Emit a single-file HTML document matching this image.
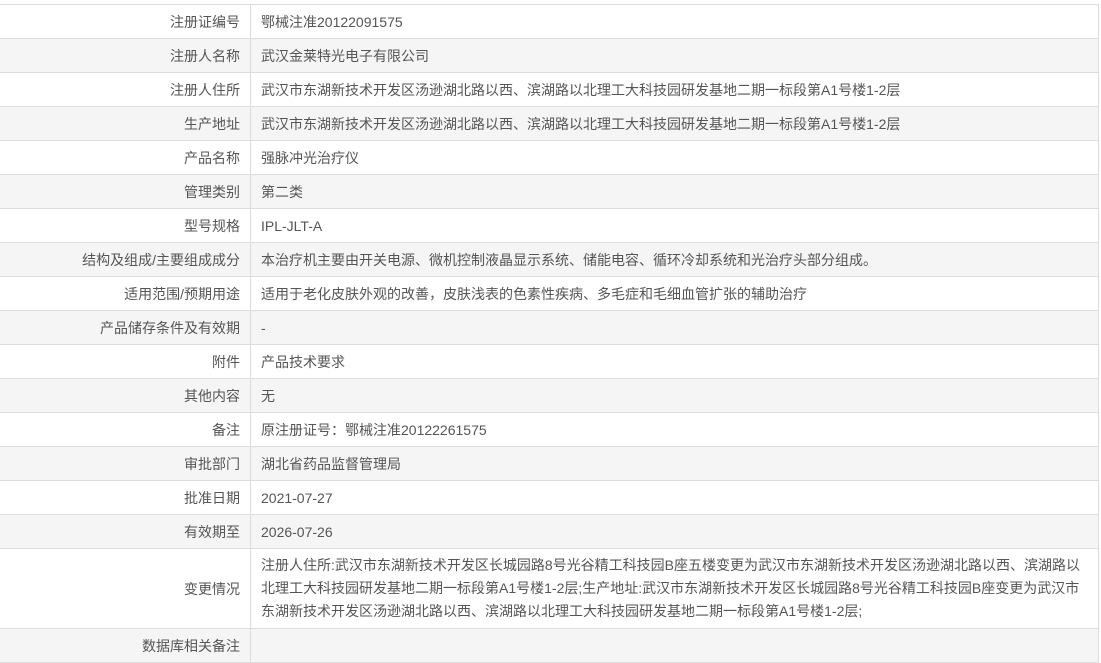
<!DOCTYPE html>
<html><head><meta charset="utf-8"><style>
html,body{margin:0;padding:0;background:#fff;}
body{width:1101px;height:661px;overflow:hidden;font-family:"Liberation Sans","Noto Sans CJK SC",sans-serif;font-size:14px;color:#555;}
table{position:absolute;left:-1px;top:4px;width:1100px;border-collapse:collapse;table-layout:fixed;}
td{border:1px solid #ddd;height:33px;padding:0 10px;line-height:22px;vertical-align:middle;}
td.l{width:230px;text-align:right;}
tr:nth-child(even) td{background:#f5f5f5;}
</style></head><body>
<table>
<tr><td class="l">注册证编号</td><td>鄂械注准20122091575</td></tr>
<tr><td class="l">注册人名称</td><td>武汉金莱特光电子有限公司</td></tr>
<tr><td class="l">注册人住所</td><td>武汉市东湖新技术开发区汤逊湖北路以西、滨湖路以北理工大科技园研发基地二期一标段第A1号楼1-2层</td></tr>
<tr><td class="l">生产地址</td><td>武汉市东湖新技术开发区汤逊湖北路以西、滨湖路以北理工大科技园研发基地二期一标段第A1号楼1-2层</td></tr>
<tr><td class="l">产品名称</td><td>强脉冲光治疗仪</td></tr>
<tr><td class="l">管理类别</td><td>第二类</td></tr>
<tr><td class="l">型号规格</td><td>IPL-JLT-A</td></tr>
<tr><td class="l">结构及组成/主要组成成分</td><td>本治疗机主要由开关电源、微机控制液晶显示系统、储能电容、循环冷却系统和光治疗头部分组成。</td></tr>
<tr><td class="l">适用范围/预期用途</td><td>适用于老化皮肤外观的改善，皮肤浅表的色素性疾病、多毛症和毛细血管扩张的辅助治疗</td></tr>
<tr><td class="l">产品储存条件及有效期</td><td>-</td></tr>
<tr><td class="l">附件</td><td>产品技术要求</td></tr>
<tr><td class="l">其他内容</td><td>无</td></tr>
<tr><td class="l">备注</td><td>原注册证号：鄂械注准20122261575</td></tr>
<tr><td class="l">审批部门</td><td>湖北省药品监督管理局</td></tr>
<tr><td class="l">批准日期</td><td>2021-07-27</td></tr>
<tr><td class="l">有效期至</td><td>2026-07-26</td></tr>
<tr><td class="l" style="height:79px">变更情况</td><td style="height:79px;padding-top:4px;padding-bottom:4px;box-sizing:border-box;line-height:23px">注册人住所:武汉市东湖新技术开发区长城园路8号光谷精工科技园B座五楼变更为武汉市东湖新技术开发区汤逊湖北路以西、滨湖路以北理工大科技园研发基地二期一标段第A1号楼1-2层;生产地址:武汉市东湖新技术开发区长城园路8号光谷精工科技园B座变更为武汉市东湖新技术开发区汤逊湖北路以西、滨湖路以北理工大科技园研发基地二期一标段第A1号楼1-2层;</td></tr>
<tr><td class="l">数据库相关备注</td><td></td></tr>
</table>
</body></html>
